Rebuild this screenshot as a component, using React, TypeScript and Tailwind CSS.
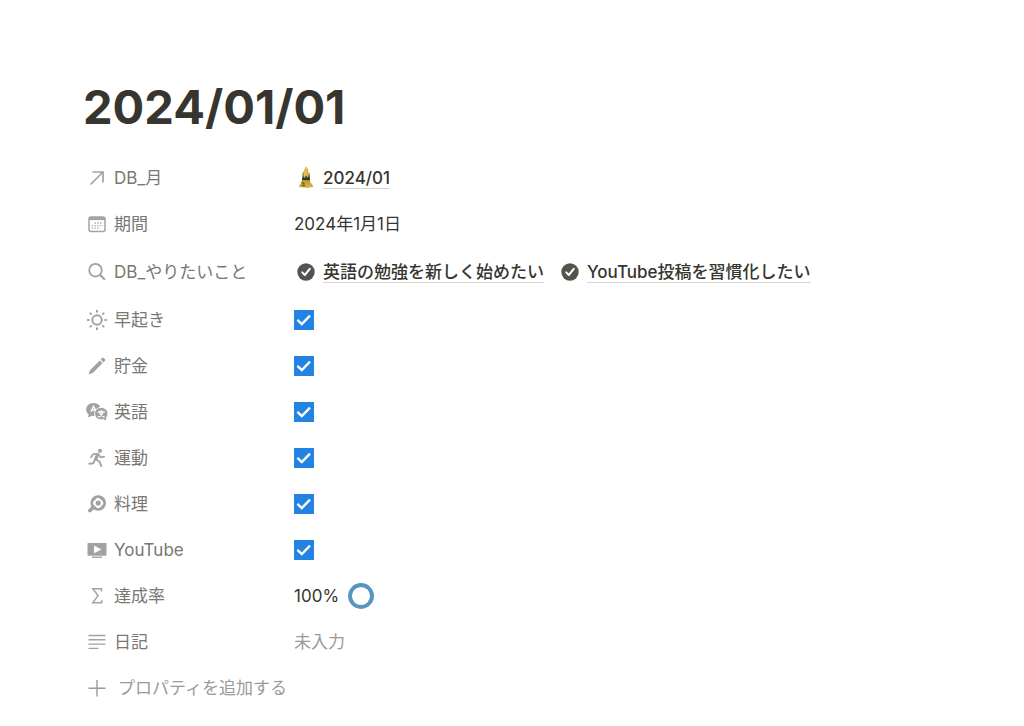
import React, { useState } from 'react';

const ArrowIcon = () => (
  <svg viewBox="0 0 22 22" className="w-[22px] h-[22px]" fill="none" stroke="currentColor" strokeWidth="1.7">
    <path d="M4.5 17.5 L17 5 M6.5 5 H17 V15.5" />
  </svg>
);

const CalendarIcon = () => (
  <svg viewBox="0 0 22 22" className="w-[22px] h-[22px]" fill="none" stroke="currentColor">
    <rect x="3" y="4" width="16" height="14.5" rx="2" strokeWidth="1.5" />
    <path d="M3 5.6 H19" strokeWidth="3" />
    <path d="M8.6 10 H17 M5.8 12.6 H17 M5.8 15.2 H14" strokeWidth="1.3" strokeDasharray="1.3 1.4" />
  </svg>
);

const SearchIcon = () => (
  <svg viewBox="0 0 22 22" className="w-[22px] h-[22px]" fill="none" stroke="currentColor" strokeWidth="1.8" strokeLinecap="round">
    <circle cx="9.5" cy="9.2" r="6.3" />
    <path d="M14.2 14 L18.2 18" strokeWidth="2.2" />
  </svg>
);

const SunIcon = () => (
  <svg viewBox="0 0 22 22" className="w-[22px] h-[22px]" fill="none" stroke="currentColor" strokeWidth="2" strokeLinecap="round">
    <circle cx="11" cy="11" r="4.7" />
    <path d="M11 1.8 V2.8 M11 19.2 V20.2 M1.8 11 H2.8 M19.2 11 H20.2 M4.4 4.4 L5.1 5.1 M16.9 16.9 L17.6 17.6 M4.4 17.6 L5.1 16.9 M16.9 5.1 L17.6 4.4" />
  </svg>
);

const PencilIcon = () => (
  <svg viewBox="0 0 22 22" className="w-[22px] h-[22px]" fill="currentColor">
    <path d="M13.7 5.4 L16.6 8.3 L6.7 18.1 L3 19.3 Q2.5 19.3 2.7 18.8 L4 15.2 Z" />
    <path d="M14.6 4.5 L16 3.1 Q17 2.3 17.9 3.1 L18.9 4.1 Q19.6 5 18.9 5.9 L17.5 7.4 Z" />
  </svg>
);

const LanguageIcon = () => (
  <svg viewBox="0 0 22 22" className="w-[22px] h-[22px]" fill="none">
    <path d="M7.6 2 C3.3 2 0.2 4.8 0.2 8.4 C0.2 10.6 1.2 12.3 2.6 13.4 C2.6 14.7 2 15.6 1.4 16.2 C3.2 16.2 4.7 15.6 5.7 14.8 C9.4 15.5 14.8 13 14.8 8.4 C14.8 4.8 11.8 2 7.6 2 Z" fill="currentColor" />
    <path d="M4.8 10.8 L7.6 5.2 L9.5 9 M6 9 H9.5" stroke="white" strokeWidth="1.4" />
    <path d="M15.2 6.4 C11.4 6.4 8.6 9 8.6 12.6 C8.6 16.2 11.4 18.8 15.2 18.8 C16 18.8 16.8 18.7 17.4 18.4 C18.3 19.2 19.6 19.9 21.2 20 C20.6 19.1 20.3 18.2 20.3 17 C21.3 15.8 21.9 14.4 21.9 12.6 C21.9 9 19 6.4 15.2 6.4 Z" fill="currentColor" stroke="white" strokeWidth="1" />
    <path d="M11.8 10.9 H18.8 M15.3 9.2 V10.9 M17.2 10.9 Q15.8 14.6 12.2 16 M13.4 11.2 Q14.8 14.6 18.4 16" stroke="white" strokeWidth="1.4" />
  </svg>
);

const RunIcon = () => (
  <svg viewBox="0 0 22 22" className="w-[22px] h-[22px]" fill="none" stroke="currentColor" strokeLinecap="round" strokeLinejoin="round">
    <circle cx="14" cy="3.8" r="2.1" fill="currentColor" stroke="none" />
    <path d="M11.8 7.5 L9.6 12" strokeWidth="3.2" />
    <path d="M11.5 6.9 L7.2 7.1 L5 10.2 M13 8.2 L15 10.4 L18.2 9.7" strokeWidth="1.7" />
    <path d="M10 12.3 L13.4 14.7 L15.4 19 M8.7 13 L7.3 16.2 L3.3 16.7" strokeWidth="1.9" />
  </svg>
);

const PanIcon = () => (
  <svg viewBox="0 0 22 22" className="w-[22px] h-[22px]" fill="none">
    <path d="M7 14.5 L4 17.5" stroke="currentColor" strokeWidth="3.8" strokeLinecap="round" />
    <circle cx="12.2" cy="10" r="7.8" fill="currentColor" />
    <path d="M12.2 4.8 C13.9 4.8 14.3 6.5 15.2 7 C16.2 7.6 17.4 8.3 17.4 10 C17.4 11.8 16 12.1 15.3 13 C14.6 13.9 14 15.2 12.2 15.2 C10.4 15.2 10 13.7 9.2 13 C8.4 12.3 7 11.8 7 10 C7 8.2 8.4 7.8 9.2 7 C10 6.2 10.5 4.8 12.2 4.8 Z" fill="white" />
    <circle cx="12.2" cy="10" r="2.6" fill="currentColor" />
    <circle cx="12.2" cy="10" r="6.4" stroke="currentColor" strokeWidth="1.6" />
  </svg>
);

const VideoIcon = () => (
  <svg viewBox="0 0 22 22" className="w-[22px] h-[22px]">
    <rect x="1.5" y="4" width="19" height="12.8" rx="0.8" fill="currentColor" />
    <path d="M8 6.5 L15.5 10.4 L8 14.3 Z" fill="white" />
    <rect x="6" y="17.6" width="10" height="1.4" fill="currentColor" />
  </svg>
);

const SigmaIcon = () => (
  <svg viewBox="0 0 22 22" className="w-[22px] h-[22px]" fill="none" stroke="currentColor" strokeWidth="1.5">
    <path d="M15.5 6.4 V3.7 H6.8 L12 10.6 L6.8 17.8 H15.7 V15.2" />
  </svg>
);

const TextIcon = () => (
  <svg viewBox="0 0 22 22" className="w-[22px] h-[22px]" fill="none" stroke="currentColor" strokeWidth="1.4">
    <path d="M2.5 4.5 H19.5 M2.5 8.8 H19.5 M2.5 13.1 H19.5 M2.5 17.4 H12.5" />
  </svg>
);

const PlusIcon = () => (
  <svg viewBox="0 0 22 22" className="w-[22px] h-[22px]" fill="none" stroke="currentColor" strokeWidth="1.4">
    <path d="M11 3 V19.5 M2.5 11.3 H19.5" />
  </svg>
);

const KadomatsuIcon = () => (
  <svg viewBox="0 0 24 24" className="w-6 h-6 shrink-0">
    <path d="M8.2 7.6 L10 5 V17 H8.2 Z M14.2 5.4 L16 8 V17 H14.2 Z" fill="#b99a3a" />
    <path d="M10.2 3.6 L12.3 0.6 L14.2 3.6 V17 H10.2 Z" fill="#d9ad3e" />
    <path d="M12 1.6 V14" stroke="#f0d27a" strokeWidth="0.8" />
    <path d="M8 13.5 L9 9.5 L10.5 12 L11.8 9.6 L13.5 11.6 L15.2 8.6 L16 13.5 Z" fill="#2f5535" />
    <path d="M8.4 12.4 H15.6 L16 14.4 H8 Z" fill="#26351f" />
    <path d="M8 14.2 H16 L17 19 H7 Z" fill="#c99a35" />
    <path d="M6.3 17.4 H17.8 L19.4 20.8 Q12 22.8 4.8 20.8 Z" fill="#d7a943" />
    <path d="M7.4 16 L10.4 18 M7.6 19.3 H11" stroke="#49632e" strokeWidth="1.2" />
  </svg>
);

const CheckCircleIcon = () => (
  <svg viewBox="0 0 24 24" className="w-6 h-6 shrink-0" fill="none">
    <circle cx="12" cy="12" r="8.7" fill="#55534e" />
    <path d="M8.2 12.4 L10.8 15 L15.8 8.8" stroke="white" strokeWidth="2" strokeLinecap="round" strokeLinejoin="round" />
  </svg>
);

interface RowProps {
  icon: React.ReactNode;
  label: string;
  htmlFor?: string;
  tall?: boolean;
  children: React.ReactNode;
}

const Row: React.FC<RowProps> = ({ icon, label, htmlFor, tall, children }) => (
  <div className={tall ? 'flex items-center h-[50px]' : 'flex items-center h-[46px]'}>
    <div className="flex items-center gap-[6px] w-52 shrink-0 text-[#787774]">
      <span className="text-[#a3a29e]">{icon}</span>
      {htmlFor ? <label htmlFor={htmlFor}>{label}</label> : <span>{label}</span>}
    </div>
    {children}
  </div>
);

const PageLink: React.FC<{ icon: React.ReactNode; title: string }> = ({ icon, title }) => (
  <a href="#" className="flex items-center gap-[5px] font-medium">
    {icon}
    <span className="border-b border-[#d6d5d2] leading-5">{title}</span>
  </a>
);

const habits = [
  { id: 'wake', label: '早起き', icon: <SunIcon /> },
  { id: 'saving', label: '貯金', icon: <PencilIcon /> },
  { id: 'english', label: '英語', icon: <LanguageIcon /> },
  { id: 'exercise', label: '運動', icon: <RunIcon /> },
  { id: 'cooking', label: '料理', icon: <PanIcon /> },
  { id: 'youtube', label: 'YouTube', icon: <VideoIcon /> }
];

const App: React.FC = () => {
  const [done, setDone] = useState<string[]>(habits.map(h => h.id));

  const toggle = (id: string) => {
    setDone(prev => (prev.includes(id) ? prev.filter(d => d !== id) : [...prev, id]));
  };

  const rate = Math.round((done.length / habits.length) * 100);

  return (
    <main className="min-h-screen bg-white pt-20 px-[83px] text-[17px] leading-6 text-[#37352f] font-['Inter','Noto_Sans_CJK_JP',sans-serif]">
      <h1 className="text-[47px] leading-[54px] font-bold mb-[21px]">2024/01/01</h1>

      <div className="pl-[3px]">
        <Row icon={<ArrowIcon />} label="DB_月">
          <PageLink icon={<KadomatsuIcon />} title="2024/01" />
        </Row>
        <Row icon={<CalendarIcon />} label="期間">
          <span>2024年1月1日</span>
        </Row>
        <Row icon={<SearchIcon />} label="DB_やりたいこと" tall>
          <div className="flex gap-[14px]">
            <PageLink icon={<CheckCircleIcon />} title="英語の勉強を新しく始めたい" />
            <PageLink icon={<CheckCircleIcon />} title="YouTube投稿を習慣化したい" />
          </div>
        </Row>

        {habits.map(habit => (
          <Row key={habit.id} icon={habit.icon} label={habit.label} htmlFor={habit.id}>
            <span className="grid w-5 h-5">
              <input
                id={habit.id}
                type="checkbox"
                checked={done.includes(habit.id)}
                onChange={() => toggle(habit.id)}
                className="peer col-start-1 row-start-1 appearance-none w-5 h-5 border border-[#37352f] checked:border-[#2383e2] checked:bg-[#2383e2]"
              />
              <svg viewBox="0 0 20 20" className="col-start-1 row-start-1 w-5 h-5 pointer-events-none invisible peer-checked:visible" fill="none">
                <path d="M3.4 9.8 L7.8 14 L16 5.6" stroke="white" strokeWidth="2.4" />
              </svg>
            </span>
          </Row>
        ))}

        <Row icon={<SigmaIcon />} label="達成率">
          <div className="flex items-center gap-[9px]">
            <span>{rate}%</span>
            <svg viewBox="0 0 26 26" className="w-[26px] h-[26px] -rotate-90" fill="none" strokeWidth="3.8">
              <circle cx="13" cy="13" r="11" stroke="#e3e2e0" />
              <circle cx="13" cy="13" r="11" stroke="#5695bf" pathLength="100" strokeDasharray={`${rate} 100`} />
            </svg>
          </div>
        </Row>
        <Row icon={<TextIcon />} label="日記">
          <span className="text-[#9b9a97]">未入力</span>
        </Row>

        <button type="button" className="flex items-center gap-[10px] h-[46px] text-[#9b9a97]">
          <PlusIcon />
          プロパティを追加する
        </button>
      </div>
    </main>
  );
};

export default App;
